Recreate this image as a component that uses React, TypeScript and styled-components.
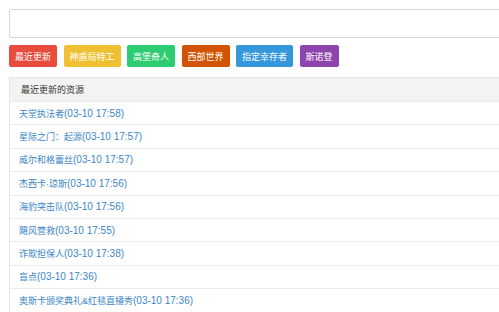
import React from "react";
import styled, { createGlobalStyle } from "styled-components";

const Global = createGlobalStyle`
  html, body { margin: 0; padding: 0; background: #fff; overflow: hidden; }
  body { font-family: "Liberation Sans", "Noto Sans CJK SC", sans-serif; }
`;

const Page = styled.div`
  width: 560px;
  padding: 9px 0 0 9px;
  box-sizing: border-box;
`;

const SearchInput = styled.input`
  display: block;
  box-sizing: border-box;
  width: 560px;
  height: 29px;
  border: 1px solid #d8d8d8;
  border-radius: 2px;
  outline: none;
  background: #fff;
`;

const TagBar = styled.div`
  display: flex;
  gap: 6.5px;
  margin-top: 7px;
`;

const Tag = styled.a<{ $bg: string }>`
  display: flex;
  align-items: center;
  height: 22px;
  padding: 0 6px;
  border-radius: 2px;
  background: ${(p) => p.$bg};
  color: #fff;
  font-size: 9px;
  font-family: "Noto Sans CJK SC", sans-serif;
  text-decoration: none;
`;

const Table = styled.div`
  margin-top: 10px;
  width: 560px;
  border: 1px solid #e6e6e6;
  box-sizing: border-box;
`;

const HeadRow = styled.div`
  height: 23px;
  display: flex;
  align-items: center;
  padding-left: 11px;
  background: #f3f3f3;
  color: #333;
  font-size: 9px;
  font-family: "Noto Sans CJK SC", sans-serif;
`;

const Row = styled.div`
  height: 22.4px;
  display: flex;
  align-items: center;
  padding-left: 9px;
  border-top: 1px solid #eaeaea;
`;

const Link = styled.a`
  display: flex;
  align-items: baseline;
  color: #3b86c8;
  text-decoration: none;
`;

const Title = styled.span`
  font-size: 9px;
  font-family: "Liberation Sans", "Noto Sans CJK SC", sans-serif;
`;

const Time = styled.span`
  font-size: 10px;
  font-family: "Liberation Sans", sans-serif;
`;

const tags = [
  { t: "最近更新", c: "#e74c3c" },
  { t: "神盾局特工", c: "#f0c033" },
  { t: "高堡奇人", c: "#2ecc71" },
  { t: "西部世界", c: "#d35400" },
  { t: "指定幸存者", c: "#3498db" },
  { t: "斯诺登", c: "#8e44ad" },
];

const items = [
  ["天堂执法者", "03-10 17:58"],
  ["星际之门：起源", "03-10 17:57"],
  ["威尔和格蕾丝", "03-10 17:57"],
  ["杰西卡·琼斯", "03-10 17:56"],
  ["海豹突击队", "03-10 17:56"],
  ["飓风营救", "03-10 17:55"],
  ["诈欺担保人", "03-10 17:38"],
  ["盲点", "03-10 17:36"],
  ["奥斯卡颁奖典礼&红毯直播秀", "03-10 17:36"],
];

export default function App() {
  return (
    <Page>
      <Global />
      <SearchInput />
      <TagBar>
        {tags.map((g) => (
          <Tag key={g.t} $bg={g.c}>{g.t}</Tag>
        ))}
      </TagBar>
      <Table>
        <HeadRow>最近更新的资源</HeadRow>
        {items.map(([name, time]) => (
          <Row key={name}>
            <Link>
              <Title>{name}</Title>
              <Time>({time})</Time>
            </Link>
          </Row>
        ))}
      </Table>
    </Page>
  );
}
